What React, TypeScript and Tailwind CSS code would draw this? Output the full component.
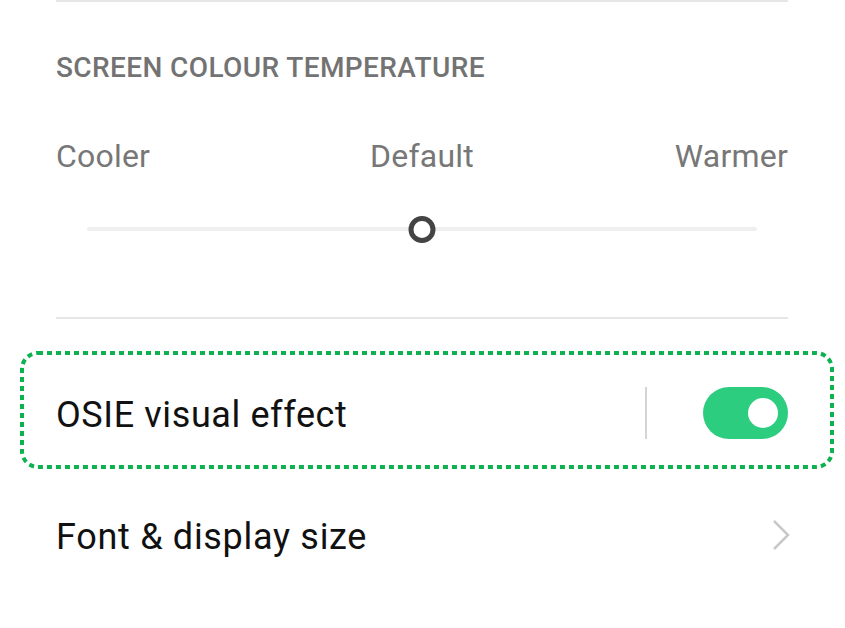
import React from 'react';

function Toggle() {
  return (
    <div className="w-[85px] h-[52px] rounded-full bg-[#2dcd7f] flex items-center justify-end pr-[10px]">
      <div className="w-[30px] h-[30px] rounded-full bg-white" />
    </div>
  );
}

export default function App() {
  return (
    <div className="w-[845px] h-[628px] bg-white overflow-hidden" style={{ fontFamily: 'Roboto, "Liberation Sans", sans-serif' }}>
      <div className="mx-[56px] w-[732px]">
        <div className="h-[2px] bg-[#e6e6e6]" />

        <p className="mt-[51px] text-[28px] leading-[30px] font-medium text-[#737373] tracking-[0.4px]">
          SCREEN COLOUR TEMPERATURE
        </p>

        <div className="mt-[53px] grid grid-cols-3 text-[32px] leading-[40px] text-[#777] tracking-[0.2px]">
          <span>Cooler</span>
          <span className="text-center">Default</span>
          <span className="text-right">Warmer</span>
        </div>

        <div className="mt-[39px] h-[28px] mx-[31px] flex items-center relative">
          <div className="w-full h-[4px] bg-[#efefef] rounded-full" />
          <div className="absolute left-1/2 -translate-x-1/2 w-[27px] h-[27px] rounded-full border-[5px] border-[#444] bg-white" />
        </div>

        <div className="mt-[74px] h-[2px] bg-[#e6e6e6]" />
      </div>

      <div className="mt-[32px] ml-[20px] w-[814px] h-[118px] relative flex items-center pl-[36px] pr-[46px] pt-[6px]">
        <svg className="absolute inset-0" width="814" height="118">
          <rect x="2" y="2" width="810" height="114" rx="16" fill="none" stroke="#0eb150" strokeWidth="4" strokeDasharray="5 4" />
        </svg>
        <span className="flex-1 text-[36px] leading-[44px] text-[#111] tracking-[0.6px] pt-[4px]">OSIE visual effect</span>
        <div className="w-[2px] h-[52px] bg-[#d4d4d4] mr-[56px]" />
        <Toggle />
      </div>

      <div className="mt-[28px] mx-[56px] h-[80px] flex items-center justify-between">
        <span className="text-[36px] leading-[44px] text-[#111] tracking-[0.7px]">Font &amp; display size</span>
        <svg width="18" height="32" viewBox="0 0 18 32" className="mr-[-1px] -mt-[4px]">
          <path d="M2 2 L16 16 L2 30" fill="none" stroke="#c8c8c8" strokeWidth="2.5" />
        </svg>
      </div>
    </div>
  );
}
